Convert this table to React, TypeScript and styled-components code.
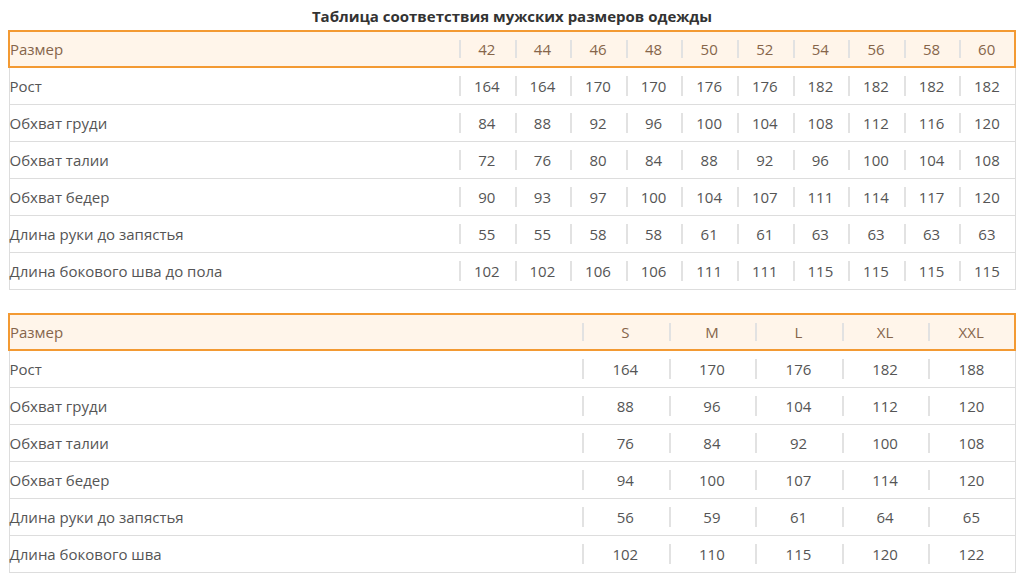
import styled, { createGlobalStyle } from "styled-components";

const GlobalStyle = createGlobalStyle`
  body {
    margin: 0 8px;
    background: #ffffff;
    font-family: "Open Sans", "Liberation Sans", sans-serif;
  }
`;

const Title = styled.h3`
  margin: 0;
  height: 30px;
  line-height: 32px;
  text-align: center;
  font-size: 15px;
  font-weight: 700;
  color: #333333;
`;

const Table = styled.table`
  width: 100%;
  border-collapse: collapse;
  table-layout: fixed;
  font-size: 15px;
  color: #555555;
  margin-bottom: 23px;
`;

const HeadRow = styled.tr`
  background: #fff5ea;
  border: 2px solid #f39a33;
  color: #86654a;
`;

const Row = styled.tr`
  border: 1px solid #dddddd;
  border-top: none;
`;

const Cell = styled.td<{ $label?: boolean; $height: number }>`
  position: relative;
  height: ${(p) => p.$height}px;
  padding: ${(p) => (p.$label ? "0 0 0 0" : "0 2px")};
  text-align: ${(p) => (p.$label ? "left" : "center")};
  vertical-align: middle;
  white-space: nowrap;

  &::before {
    content: "";
    display: ${(p) => (p.$label ? "none" : "block")};
    position: absolute;
    left: 0;
    top: 8px;
    bottom: 8px;
    width: 2px;
    background: #e2e2e2;
  }
`;

interface SizeTable {
  labelWidth: number;
  sizes: string[];
  rows: { label: string; values: number[] }[];
}

const numeric: SizeTable = {
  labelWidth: 450,
  sizes: ["42", "44", "46", "48", "50", "52", "54", "56", "58", "60"],
  rows: [
    { label: "Рост", values: [164, 164, 170, 170, 176, 176, 182, 182, 182, 182] },
    { label: "Обхват груди", values: [84, 88, 92, 96, 100, 104, 108, 112, 116, 120] },
    { label: "Обхват талии", values: [72, 76, 80, 84, 88, 92, 96, 100, 104, 108] },
    { label: "Обхват бедер", values: [90, 93, 97, 100, 104, 107, 111, 114, 117, 120] },
    { label: "Длина руки до запястья", values: [55, 55, 58, 58, 61, 61, 63, 63, 63, 63] },
    { label: "Длина бокового шва до пола", values: [102, 102, 106, 106, 111, 111, 115, 115, 115, 115] },
  ],
};

const letters: SizeTable = {
  labelWidth: 573,
  sizes: ["S", "M", "L", "XL", "XXL"],
  rows: [
    { label: "Рост", values: [164, 170, 176, 182, 188] },
    { label: "Обхват груди", values: [88, 96, 104, 112, 120] },
    { label: "Обхват талии", values: [76, 84, 92, 100, 108] },
    { label: "Обхват бедер", values: [94, 100, 107, 114, 120] },
    { label: "Длина руки до запястья", values: [56, 59, 61, 64, 65] },
    { label: "Длина бокового шва", values: [102, 110, 115, 120, 122] },
  ],
};

function Sizes({ data }: { data: SizeTable }) {
  return (
    <Table>
      <colgroup>
        <col style={{ width: data.labelWidth }} />
        {data.sizes.map((s) => (
          <col key={s} />
        ))}
      </colgroup>
      <tbody>
        <HeadRow>
          <Cell $label $height={34}>
            Размер
          </Cell>
          {data.sizes.map((s) => (
            <Cell key={s} $height={34}>
              {s}
            </Cell>
          ))}
        </HeadRow>
        {data.rows.map((r) => (
          <Row key={r.label}>
            <Cell $label $height={36}>
              {r.label}
            </Cell>
            {r.values.map((v, i) => (
              <Cell key={i} $height={36}>
                {v}
              </Cell>
            ))}
          </Row>
        ))}
      </tbody>
    </Table>
  );
}

export default function App() {
  return (
    <>
      <GlobalStyle />
      <Title>Таблица соответствия мужских размеров одежды</Title>
      <Sizes data={numeric} />
      <Sizes data={letters} />
    </>
  );
}
